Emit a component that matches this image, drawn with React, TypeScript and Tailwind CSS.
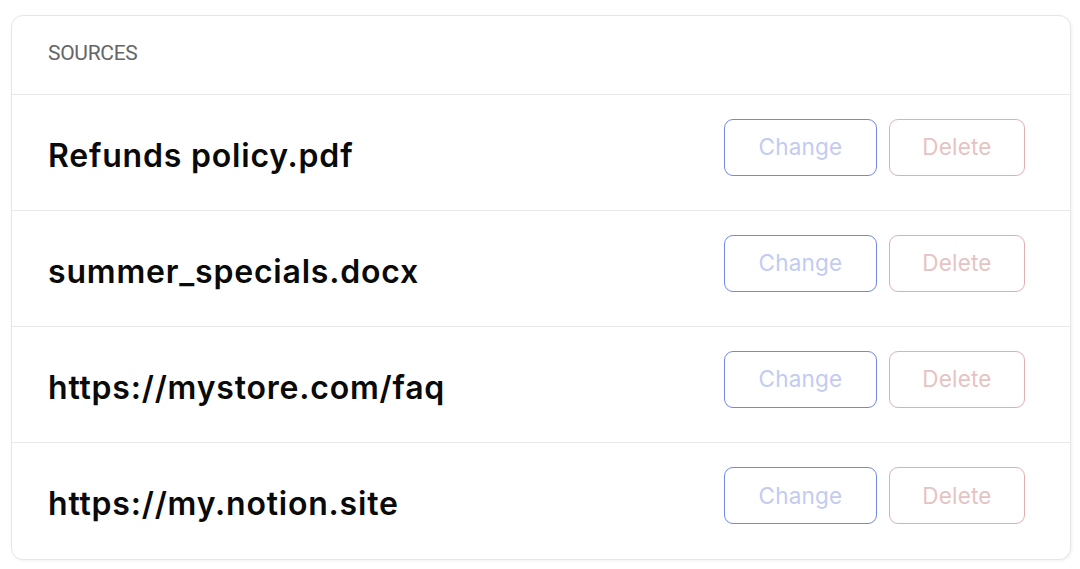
const sources = [
  'Refunds policy.pdf',
  'summer_specials.docx',
  'https://mystore.com/faq',
  'https://my.notion.site',
];

export default function App() {
  return (
    <div className="min-h-screen bg-white pt-[15px] pl-[11px] pr-[9px] font-['Inter',sans-serif]">
      <div className="rounded-[12px] border border-[#e6e6e6] bg-white shadow-[1px_1px_3px_rgba(0,0,0,0.06)] overflow-hidden">
        <div className="h-[79px] flex items-center px-[36px] pb-[2px] border-b border-[#e8e8e8]">
          <span className="text-[21px] tracking-[-0.3px] text-[#666666] font-['Roboto',sans-serif]">
            SOURCES
          </span>
        </div>
        {sources.map((name, i) => (
          <div
            key={name}
            className={
              'h-[116px] flex items-center justify-between pl-[36px] pr-[45px] ' +
              (i < sources.length - 1 ? 'border-b border-[#e8e8e8]' : '')
            }
          >
            <span className="mt-[6px] text-[32px] font-semibold text-[#0a0a0a] tracking-[0.8px]">{name}</span>
            <div className="flex gap-[12px] mb-[11px]">
              <button className="w-[153px] h-[57px] rounded-[9px] border border-[#7388e2] text-[22.5px] tracking-[0.2px] text-[#c3cbf1]">
                Change
              </button>
              <button className="w-[136px] h-[57px] rounded-[9px] border border-[#e0b0b0] text-[22.5px] tracking-[0.2px] text-[#e6c3c3]">
                Delete
              </button>
            </div>
          </div>
        ))}
      </div>
    </div>
  );
}
